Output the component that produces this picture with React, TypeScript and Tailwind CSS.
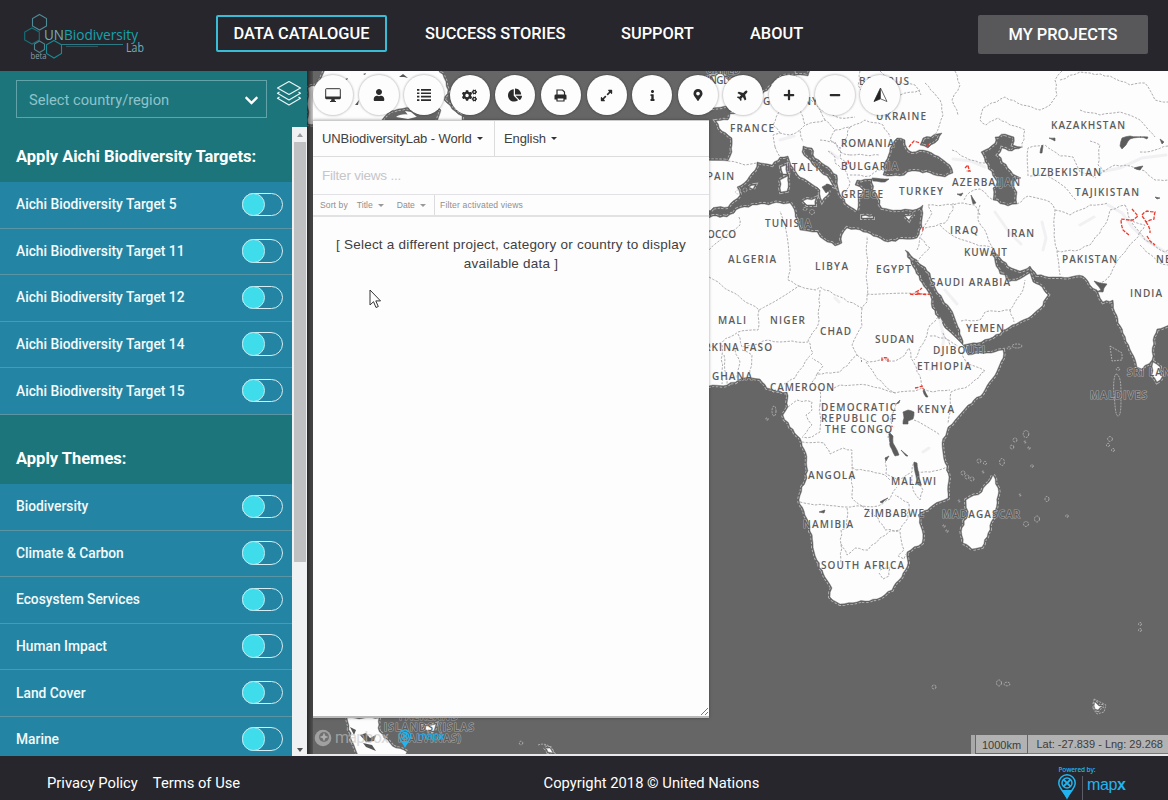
import React from "react";
import {
  FaUser, FaCogs, FaChartPie, FaExpandAlt, FaInfo,
  FaMapMarkerAlt, FaPlane, FaPlus, FaMinus, FaChevronDown,
} from "react-icons/fa";

/* ---------- map geometry ---------- */

const CONTINENT =
  "700,386 709,386 727,385 743,378 760,379 767,388 775,391 787,392 788,407 783,415 790,427 800,438 806,453 807,467 807,478 802,487 799,500 805,515 810,527 813,543 817,560 825,577 832,588 830,597 840,604 857,602 877,599 892,590 903,573 908,563 907,552 922,543 922,530 918,515 933,505 948,498 949,477 945,463 942,443 948,427 955,420 968,405 983,393 995,375 1003,358 1003,350 987,353 968,355 962,344 945,328 938,317 932,308 930,295 922,283 913,267 905,250 917,260 930,273 938,293 950,308 960,330 963,345 977,343 993,337 1012,325 1028,318 1040,308 1048,295 1042,287 1033,282 1030,273 1020,279 1008,282 1005,275 1000,274 995,262 991,251 998,255 1008,266 1020,271 1030,266 1037,275 1057,277 1083,276 1090,285 1097,290 1103,302 1113,300 1115,312 1123,333 1132,353 1137,367 1142,369 1152,360 1153,340 1157,329 1185,318 1185,50 820,50 808,76 796,75 782,76 776,84 764,92 752,105 737,113 730,114 728,120 716,121 722,131 732,138 732,152 728,161 700,160 700,214 717,207 728,207 740,195 737,187 747,180 755,170 757,162 772,165 780,157 788,156 791,165 800,177 812,184 820,190 822,201 829,193 826,184 833,186 829,179 815,167 807,158 802,152 803,146 812,148 815,158 825,165 837,175 838,187 842,197 848,205 857,211 858,198 863,190 855,185 857,180 872,179 873,190 878,197 882,208 897,210 913,210 923,205 923,213 922,227 917,238 903,239 888,242 877,237 860,230 847,228 842,235 842,243 835,246 820,237 817,232 800,230 797,220 795,213 790,203 780,203 757,205 740,208 727,217 713,216 700,220";

const INLAND_SEAS = [
  "883,175 885,162 890,148 897,138 905,140 907,148 912,152 923,150 935,155 950,165 953,173 945,177 930,173 912,171 900,176",
  "920,145 923,138 942,133 935,143 928,148",
  "1005,134 1014,137 1013,145 1022,147 1012,151 1002,148 998,155 1008,168 1013,174 1021,178 1013,182 1017,192 1017,204 1008,206 993,200 993,188 997,182 985,162 981,152 995,143 995,137",
];

const ISLANDS = [
  "993,475 998,488 997,503 988,533 982,547 972,549 963,543 962,528 968,515 966,500 982,492",
  "1153,362 1160,367 1162,377 1157,382 1152,375",
  "781,167 786,165 787,174 783,174",
  "780,180 788,176 787,191 781,192",
  "803,201 816,198 815,205 807,205",
  "862,216 873,216 873,218 862,218",
  "905,216 914,214 909,220",
  "749,187 755,185 753,189",
  "712,76 722,74 731,84 735,98 728,106 713,108 716,96",
  "347,718 379,718 378,728 384,738 396,748 407,752 404,757 360,757 352,741",
  "424,726 436,724 434,731 426,730",
  "544,747 550,748 553,753 548,752",
  "1095,702 1099,706 1103,706 1098,710 1095,709",
  "326,65 436,65 444,78 448,90 444,100 452,109 462,116 463,124 436,124 441,110 436,106 411,108 398,109 388,113 380,124 308,124 308,88 318,84",
];

const LAKES = [
  "903,412 908,410 914,412 913,419 908,421 908,424 903,424 904,418",
  "889,432 893,436 893,443 899,455 895,456 890,446",
  "914,462 917,463 919,474 921,486 917,484 915,472",
  "901,450 908,456 906,456",
  "885,458 889,456 886,461",
  "896,404 900,400 899,403",
  "819,512 825,510 824,513",
  "880,502 888,498 882,503",
  "924,389 928,397 926,397 923,391",
  "1120,146 1122,138 1130,136 1141,137 1130,139 1126,145 1122,149",
  "1140,137 1148,137 1147,139",
  "1134,168 1143,166 1140,170",
  "1160,139 1164,142 1162,144",
  "1049,138 1055,138 1055,141",
  "1040,153 1042,145 1043,146 1042,153",
  "971,195 976,203 973,204",
  "957,194 963,193 961,196",
  "872,178 889,179 885,182 873,181",
  "1096,292 1103,292 1104,288 1107,284 1100,283 1094,281 1101,290",
  "1155,197 1160,198 1157,199",
  "822,187 828,184 832,187 826,193",
];

const BORDERS = [
  "709,277 759,310 799,286 788,280 790,266 785,225 780,211",
  "799,286 816,290 820,287 862,308 867,302 867,236",
  "867,294 930,294", "862,308 862,326 852,345 857,355 840,372 817,374",
  "820,290 818,325 808,340 813,353 805,362 795,378 784,384",
  "759,310 758,330 738,332 718,344 709,348",
  "738,334 742,347 753,345 768,340 780,342 792,341 808,342",
  "857,355 868,362 880,360 895,361 905,355 909,348 911,358 914,363",
  "866,362 875,375 887,388 895,393 915,391 922,388 933,392 950,390",
  "914,363 921,380 923,388", "938,317 930,325 925,340 914,360", "930,336 945,338 958,346",
  "962,352 967,364 985,371 975,380 965,388 951,392 951,410 948,424",
  "817,374 812,382 820,390 820,405", "834,388 840,385 867,385 880,388 896,393",
  "724,355 727,384", "735,350 740,362 737,378", "742,350 752,355 750,376", "722,345 722,384",
  "817,374 823,366 812,358", "788,407 797,400 812,402 812,410 806,415 812,425 803,436",
  "820,405 820,432 812,437 802,437", "802,442 824,443 830,454 843,448 852,450 852,467 856,470",
  "852,467 852,498 862,506 878,506 890,499 897,487", "856,470 870,471 885,475 890,480",
  "886,457 886,474 898,480 912,472 914,462", "896,404 890,418 892,425 888,437 890,445",
  "914,420 940,435", "917,472 930,472 947,467", "912,475 913,490 920,500 923,490 920,482",
  "800,502 810,504 825,505 845,507 862,506", "847,508 847,528 841,530 841,563",
  "841,544 847,555 855,548 868,550 880,538 890,531 900,530 908,518 909,503 895,495",
  "862,506 878,518 885,530 900,531", "900,532 904,550 898,556 904,559 908,552",
  "880,570 890,568 889,576 883,579 879,573",
  "917,250 920,237 925,225 932,213 928,205 953,205 963,203 975,205 980,215",
  "925,228 945,223 953,210 953,203", "940,225 955,237 975,244 993,248", "917,262 930,248 920,238",
  "980,205 978,220 987,235 993,248", "964,200 970,192 980,189 993,200",
  "961,321 980,320 985,312 1010,310 1023,290 1025,280", "1010,310 1014,322",
  "1017,204 1028,196 1050,202 1055,210 1054,235 1057,250 1060,275", "1057,251 1075,251 1090,245 1105,225 1110,210 1125,205",
  "1055,210 1070,215 1090,205 1108,203", "1125,205 1130,220 1145,225 1135,240 1125,252 1115,265 1108,278 1100,283",
  "1028,176 1028,148 1045,145 1060,156 1073,157 1080,172 1096,178", "1030,176 1045,174 1062,185 1076,200",
  "1022,148 1025,130 1010,125 998,118 986,125 980,120 983,108 1005,97 1022,105 1040,110 1050,105 1057,95 1055,80 1062,71",
  "955,71 960,85 952,100 958,115", "952,150 970,160 985,163", "925,83 940,100 943,115 935,135",
  "1060,80 1080,72 1110,76 1130,85 1145,83 1155,100 1168,102", "1090,141 1100,145 1098,165 1105,173",
  "1100,174 1115,165 1130,166 1145,171 1155,180 1168,180", "1080,110 1100,115 1120,112 1140,120 1155,137",
  "1130,220 1145,240 1165,252 1168,250", "1140,245 1158,262 1168,265",
  "775,147 773,135 780,133 790,135 800,130 803,142", "775,147 780,157", "779,112 773,125 780,133",
  "795,71 800,85 806,95 820,110 840,118 855,117", "806,125 825,120 835,130 850,127 865,120 883,125 890,137",
  "785,95 800,108 805,125 800,130", "825,120 820,110", "820,140 835,142 840,152 850,155",
  "835,130 830,140 840,148 840,158 848,165", "850,127 845,140 840,148", "845,170 850,182 845,195",
  "850,175 870,176 878,170 885,170", "850,155 880,155", "890,110 900,95 920,90", "860,71 858,85 868,98 892,100",
  "728,161 745,165 757,163", "739,217 740,225 709,250", "943,333 950,345",
  "828,151 835,157 835,163 842,170", "880,71 895,82 915,85 921,95", "1140,152 1155,150 1168,146",
];

const DISPUTED = [
  "909,147 914,141 920,143", "927,147 929,143", "845,165 848,161 851,168",
  "965,168 968,165 970,171 966,171", "923,227 923,231",
  "910,294 920,294 916,292 922,288", "918,294 930,294", "882,361 882,358 888,358 888,362",
  "915,388 922,386 923,389", "892,427 892,426", "861,361 862,361",
  "1132,209 1138,216 1133,220 1121,219 1123,230 1129,235", "1142,215 1147,211 1155,212 1154,219 1146,222 1142,216",
  "1146,222 1150,230 1150,233", "1147,236 1150,241 1155,245",
];

const SMALL_ISLES: [number, number, number, number][] = [
  [1026, 434, 2.8, 3.5], [1015, 440, 2, 2], [1012, 447, 1.8, 2], [1025, 442, 1, 1], [1029, 448, 1.2, 1.2],
  [1110, 439, 2.4, 2.4], [1108, 445, 1.6, 1.6], [1113, 450, 1.5, 1.5], [979, 461, 2, 2], [985, 463, 1.6, 1.6],
  [963, 473, 2, 2], [967, 477, 2, 2], [972, 479, 2, 2], [983, 472, 1, 1], [1002, 462, 2.4, 3.5],
  [1032, 466, 1.3, 1.3], [1020, 495, 1, 1], [1047, 499, 2, 2.6], [1026, 524, 2.5, 2.5], [1037, 519, 2.5, 3],
  [1067, 516, 1.3, 1.3], [959, 501, 1, 1], [944, 526, 1.2, 1.2], [947, 531, 1.2, 1.2],
  [1140, 624, 1.5, 1.5], [1140, 630, 1.5, 1.5], [999, 683, 2.5, 3], [1007, 684, 3, 1.8], [934, 687, 2, 2],
  [521, 743, 1.8, 1.8], [774, 411, 2, 5], [767, 419, 1.2, 1.2], [1017, 346, 5, 2], [1009, 348, 2, 1.2],
  [1118, 369, 1.8, 1.4], [738, 192, 2.5, 2], [745, 190, 2, 2], [812, 212, 2.5, 2.5], [805, 209, 2, 1.5],
];

type Label = [string, number, number, number];
const LABELS: Label[] = [
  ["UNITED", 706, 740, 74], ["KINGDOM", 701, 746, 84], ["FRANCE", 730, 774, 132], ["GERMANY", 763, 818, 105], ["BELARUS", 859, 909, 85],
  ["UKRAINE", 876, 926, 120], ["ROMANIA", 841, 894, 147], ["BULGARIA", 841, 898, 170], ["GREECE", 841, 883, 198],
  ["ITALY", 787, 820, 171], ["SPAIN", 700, 734, 180], ["MOROCCO", 683, 736, 238], ["TUNISIA", 765, 811, 227],
  ["ALGERIA", 728, 776, 263], ["LIBYA", 815, 848, 270], ["EGYPT", 876, 911, 273], ["SAUDI ARABIA", 930, 1010, 286],
  ["KUWAIT", 964, 1007, 256], ["IRAQ", 950, 978, 234], ["IRAN", 1007, 1034, 237], ["TURKEY", 899, 943, 195],
  ["AZERBAIJAN", 952, 1020, 186], ["TAJIKISTAN", 1075, 1139, 196], ["UZBEKISTAN", 1032, 1101, 176],
  ["KAZAKHSTAN", 1051, 1125, 129], ["PAKISTAN", 1062, 1117, 263], ["NEPAL", 1156, 1192, 263], ["INDIA", 1130, 1162, 297],
  ["YEMEN", 966, 1004, 332], ["DJIBOUTI", 933, 985, 354], ["ETHIOPIA", 917, 971, 370], ["KENYA", 917, 954, 413],
  ["MALI", 718, 746, 324], ["NIGER", 770, 805, 324], ["CHAD", 820, 851, 335], ["SUDAN", 875, 914, 343],
  ["BURKINA FASO", 688, 772, 351], ["GHANA", 712, 752, 380], ["CAMEROON", 770, 834, 391],
  ["DEMOCRATIC", 821, 896, 411], ["REPUBLIC OF", 821, 896, 422], ["THE CONGO", 825, 892, 433],
  ["ANGOLA", 808, 855, 479], ["MALAWI", 891, 936, 485], ["ZIMBABWE", 864, 924, 517], ["NAMIBIA", 803, 853, 528],
  ["SOUTH AFRICA", 821, 904, 569], ["MADAGASCAR", 942, 1020, 518], ["MALDIVES", 1090, 1147, 399],
  ["SRI LANKA", 1127, 1186, 376], ["FALKLAND", 399, 458, 720], ["ISLANDS (ISLAS", 384, 474, 731], ["MALVINAS)", 398, 461, 742],
];

/* Breaks long segments into short, slightly displaced steps for a natural line. */
function trace(points: string, closed: boolean, amount: number, step = 4): string {
  const pts = points.split(" ").map((p) => p.split(",").map(Number));
  const out: string[] = [];
  const n = closed ? pts.length : pts.length - 1;
  for (let i = 0; i < n; i++) {
    const [ax, ay] = pts[i];
    const [bx, by] = pts[(i + 1) % pts.length];
    const length = Math.hypot(bx - ax, by - ay);
    const parts = Math.max(1, Math.round(length / step));
    for (let k = 0; k < parts; k++) {
      const t = k / parts;
      const x = ax + (bx - ax) * t;
      const y = ay + (by - ay) * t;
      const wave = k === 0 ? 0 : Math.sin(x * 12.9 + y * 78.2) * amount;
      out.push(`${(x - ((by - ay) / (length || 1)) * wave).toFixed(1)},${(y + ((bx - ax) / (length || 1)) * wave).toFixed(1)}`);
    }
  }
  if (!closed) out.push(pts[pts.length - 1].join(","));
  return `M${out.join("L")}${closed ? "Z" : ""}`;
}

const LAND = [CONTINENT, ...INLAND_SEAS, ...ISLANDS].map((p) => trace(p, true, 0.9)).join("");
const LAKE_PATH = LAKES.map((p) => trace(p, true, 0.4)).join("");
const BORDER_PATH = BORDERS.map((p) => trace(p, false, 0.8, 5)).join("");
const DISPUTED_PATH = DISPUTED.map((p) => trace(p, false, 0.5)).join("");

function WorldMap() {
  return (
    <svg className="block h-full w-full" viewBox="307 71 861 683" preserveAspectRatio="none">
      <rect x="307" y="71" width="861" height="685" fill="#666666" />
      <path d={LAND} fill="none" stroke="#b4b4b4" strokeWidth="4" strokeDasharray="2.5 1.5" />
      <path d={LAND} fill="none" stroke="#636363" strokeWidth="2.2" />
      <path d={LAND} fill="#fdfdfd" fillRule="evenodd" stroke="#5c5c5c" strokeWidth="0.4" />
      <g fill="none" stroke="#f1f1f4" strokeWidth="3" strokeLinecap="round">
        <path d="M1108 205l14 8 10 14 15 14 20 12M1100 172l20-4 22-10 24-3M1042 222l4 16-3 12M995 212l14 20 12 12M940 320l4 18-3 18M930 370l12-8M945 290l12 14M835 298l4 4M780 140l14-4M830 152l8 6M985 167l-14-6-18-2M1080 225l14-8M923 452l6-4" />
      </g>
      <path d={BORDER_PATH} fill="none" stroke="#aeaeb2" strokeWidth="1" strokeDasharray="2.4 1.4" />
      <path d={LAKE_PATH} fill="#5c5c5c" stroke="#5c5c5c" strokeWidth="0.6" />
      <path d={DISPUTED_PATH} fill="none" stroke="#ea3b2e" strokeWidth="1.3" strokeDasharray="3.5 1.3" />
      <g fill="none" stroke="#bdbdbd" strokeWidth="0.8" strokeDasharray="2 1">
        {SMALL_ISLES.map(([x, y, rx, ry]) => <ellipse key={`${x}-${y}`} cx={x} cy={y} rx={rx} ry={ry} />)}
        <path d="M1110 346l12 7v7l-10 1zM1116 374c5 1 5 12 5 22s0 20-3 20-3-14-4-22 0-19 2-20z" />
        <path d="M1094 699l12 6-2 7-7 2-3-4zM538 745c8-3 14 2 16 8" />
      </g>
      <g fill="#555555">
        <path d="M360 735l6-2 4 5 6-3-2 6-8 1zM350 727l6 3-2 5zM363 743l9 2 4 6-10-4zM363 74l3-1-1 2zM399 77l4-3 5 4-4-1zM355 105l4-5-1 5zM345 79l3-1-1 2z" />
      </g>
      <path d="M396 117c4-3 12-4 20 0l-8 2zM405 111l6 1 6 5-9-2z" fill="#fdfdfd" />
      <g fontFamily="'Open Sans','Noto Sans',sans-serif" fontSize="10" fontWeight="600" fill="#5c5c5c">
        {LABELS.map(([text, x0, x1, y]) => (
          <text key={text + x0} x={x0} y={y} textLength={x1 - x0} lengthAdjust="spacing" stroke="#ffffff" strokeOpacity="0.4" strokeWidth="1.2" paintOrder="stroke">
            {text}
          </text>
        ))}
      </g>
      <g opacity="0.6">
        <circle cx="323" cy="738" r="8.3" fill="#c8c8c8" />
        <circle cx="324" cy="737" r="5" fill="#777" />
        <path d="M324 732.5l1.3 3.2 3.2 1.3-3.2 1.3-1.3 3.2-1.3-3.2-3.2-1.3 3.2-1.3z" fill="#ddd" />
        <text x="335" y="743" fontFamily="Roboto, sans-serif" fontSize="16" fill="#c4c4c4" textLength="54">mapbox</text>
      </g>
      <Pin x={398.5} y={729.5} scale={0.72} />
      <text x="418" y="740" fontFamily="'Liberation Sans', sans-serif" fontSize="11.5" fill="#1ba9ea" textLength="27">map<tspan fontWeight="700">x</tspan></text>
    </svg>
  );
}

function Pin({ x, y, scale }: { x: number; y: number; scale: number }) {
  return (
    <g transform={`translate(${x} ${y}) scale(${scale})`}>
      <path d="M9 .8a8.2 8.2 0 0 0-8.2 8.2c0 5 4.800 8 8.200 15 3.400-7 8.200-10 8.200-15A8.200 8.200 0 0 0 9 .8z" fill="none" stroke="#22b4ee" strokeWidth="1.500" />
      <path d="M3.500 16h11L9 24.500z" fill="#22b4ee" />
      <circle cx="9" cy="9" r="5" fill="none" stroke="#22b4ee" strokeWidth="1.500" />
      <path d="M5.500 5.500l7 7M12.500 5.500l-7 7" stroke="#22b4ee" strokeWidth="1.800" />
    </g>
  );
}

/* ---------- chrome ---------- */

function Logo() {
  return (
    <svg className="h-[54px] w-[126px]" viewBox="22 8 126 54">
      <g fill="none" strokeWidth="1.100">
        <path d="M39.500 13.500l7 4v7.500l-7 4-7-4v-7.500z" stroke="#4d8c98" />
        <path d="M32 27l7.300 4v8l-7.300 4-7.300-4v-8z" stroke="#14727c" />
        <path d="M39.500 40l5 3v5.500l-5 3-5-3v-5.500z" stroke="#52818c" />
        <path d="M54 39.500l7.500 4.300v8.700L54 57l-7.500-4.500v-8.700z" stroke="#178a95" />
        <path d="M61 43.500h62" stroke="#2a7b86" />
        <path d="M66 45.500h32" stroke="#39535b" />
      </g>
      <text y="38.500" fontFamily="'Open Sans', sans-serif" fontSize="14.500">
        <tspan x="44" fill="#6fb0bc" textLength="20" lengthAdjust="spacingAndGlyphs">UN</tspan>
        <tspan x="64" fill="#14a3af" textLength="74" lengthAdjust="spacingAndGlyphs">Biodiversity</tspan>
      </text>
      <text x="126" y="50.500" fontFamily="'Open Sans', sans-serif" fontSize="12" fill="#6fb0bc" textLength="18" lengthAdjust="spacingAndGlyphs">Lab</text>
      <text x="30.500" y="57.500" fontFamily="'Open Sans', sans-serif" fontSize="9" fill="#84a0a9" textLength="16" lengthAdjust="spacingAndGlyphs">beta</text>
    </svg>
  );
}

function Header() {
  return (
    <header className="flex h-[71px] shrink-0 items-center bg-[#27262c] pl-[22px] pr-5 text-[16.400px] font-medium text-white">
      <Logo />
      <nav className="ml-[68px] mt-[-4px] flex items-center whitespace-nowrap">
        <a className="flex h-[37px] w-[171px] items-center justify-center rounded-[2px] border-2 border-[#3bbcd6] pt-0.5">DATA CATALOGUE</a>
        <a className="ml-[38px] w-[141px] pt-0.5">SUCCESS STORIES</a>
        <a className="ml-[55px] w-[73px] pt-0.5">SUPPORT</a>
        <a className="ml-[56px] pt-0.5">ABOUT</a>
      </nav>
      <button className="ml-auto mt-[-2px] h-[39px] w-[170px] rounded-[2px] bg-[#58585b] pt-0.5 font-medium">MY PROJECTS</button>
    </header>
  );
}

function ToggleRow({ label }: { label: string }) {
  return (
    <div className="flex h-[46.6px] shrink-0 items-center justify-between border-b border-[#5a95a4] pb-px pl-4 pr-[9px]">
      <span className="mt-[1.600px] text-[13.800px] font-medium leading-none text-[#f4fafc]">{label}</span>
      <span className="flex h-[23.500px] w-[41.500px] items-center rounded-full border border-[#d5edf3]">
        <span className="-ml-px h-[23.500px] w-[23.500px] rounded-full border border-[#bdeaf1] bg-[#3fdcec]" />
      </span>
    </div>
  );
}

function SectionTitle({ children, className }: { children: React.ReactNode; className: string }) {
  return (
    <h2 className={`flex shrink-0 items-end bg-[#1c757b] pl-4 text-[16.500px] font-bold leading-5 text-white ${className}`}>{children}</h2>
  );
}

function Sidebar() {
  const targets = [5, 11, 12, 14, 15];
  const themes = ["Biodiversity", "Climate & Carbon", "Ecosystem Services", "Human Impact", "Land Cover", "Marine"];
  return (
    <aside className="flex w-[307px] shrink-0 flex-col bg-[#1c757b]">
      <div className="flex h-14 shrink-0 items-start pl-4 pt-[9px]">
        <div className="flex h-[38px] w-[251px] items-center justify-between border border-[#62a3a9] pl-3 pr-[7px]">
          <span className="mt-[3px] text-[14.700px] text-[#8fc3cb]">Select country/region</span>
          <FaChevronDown className="mt-[3px] h-[15px] w-[15px] text-white" />
        </div>
        <svg className="ml-[9px] h-[27px] w-[26px]" viewBox="0 0 26 27" fill="none" stroke="#e8f5f6" strokeWidth="1.200" strokeLinejoin="round">
          <path d="M13 1.500L24.500 8 13 14.500 1.500 8z" />
          <path d="M3.500 12l-2 1.300L13 20l11.500-6.700-2-1.300" />
          <path d="M3.500 17l-2 1.300L13 25l11.500-6.700-2-1.300" />
        </svg>
      </div>
      <div className="flex min-h-0 flex-1">
        <div className="flex w-[292px] flex-col overflow-hidden bg-[#2385a3]">
          <SectionTitle className="h-[55px] pb-[15px]">Apply Aichi Biodiversity Targets:</SectionTitle>
          {targets.map((n) => <ToggleRow key={n} label={`Aichi Biodiversity Target ${n}`} />)}
          <SectionTitle className="h-[69px] pb-[15px]">Apply Themes:</SectionTitle>
          {themes.map((t) => <ToggleRow key={t} label={t} />)}
        </div>
        <div className="flex w-[15px] flex-col items-center bg-[#f0f1f3]">
          <div className="flex h-[15px] items-center">
            <span className="border-x-[3.500px] border-b-[4px] border-x-transparent border-b-[#9b9b9b]" />
          </div>
          <div className="h-[420px] w-3 bg-[#bfc0c2]" />
          <div className="mt-auto flex h-[13px] items-center">
            <span className="border-x-[3.500px] border-t-[4px] border-x-transparent border-t-[#505050]" />
          </div>
        </div>
      </div>
    </aside>
  );
}

function DesktopIcon() {
  return (
    <svg className="h-[14px] w-4" viewBox="0 0 16 14" fill="none">
      <path d="M1.300 .7h13.400a.6.6 0 0 1 .6.600v8.900H.700V1.300a.6.600 0 0 1 .6-.600z" stroke="#333" strokeWidth="1" />
      <path d="M.500 8.500h15v2a.8.800 0 0 1-.800.800H1.300a.800.800 0 0 1-.800-.800zM6.500 11h3l.5 2h1v1H5v-1h1z" fill="#333" />
    </svg>
  );
}

function NorthIcon() {
  return (
    <svg className="h-4 w-[15px]" viewBox="0 0 15 16">
      <path d="M7.500 1L1 14.500l6.500-2.700z" fill="#222" stroke="#222" strokeWidth=".8" strokeLinejoin="round" />
      <path d="M7.500 1L14 14.500l-6.500-2.700z" fill="#fff" stroke="#444" strokeWidth=".8" strokeLinejoin="round" />
    </svg>
  );
}

function ListIcon() {
  return (
    <svg className="h-3 w-[14px]" viewBox="0 0 14 12" fill="#2b2b2b">
      <path d="M0 0h2.400v1.700H0zM0 3.400h2.400v1.700H0zM0 6.800h2.400v1.700H0zM0 10.200h2.400v1.700H0zM4 0h10v1.700H4zM4 3.400h10v1.700H4zM4 6.800h10v1.700H4zM4 10.200h10v1.700H4z" />
    </svg>
  );
}

function PrintIcon() {
  return (
    <svg className="h-[13px] w-[13px]" viewBox="0 0 13 13" fill="none" stroke="#2b2b2b">
      <path d="M3 6V1h5.500L10.500 3v3" strokeWidth="1.200" />
      <path d="M1.800 5.500h9.400a1.300 1.300 0 0 1 1.300 1.300V10.500h-12V6.800a1.300 1.300 0 0 1 1.300-1.300z" fill="#2b2b2b" stroke="none" />
      <path d="M3 9h7v3H3z" fill="#fdfdfd" strokeWidth="1.200" />
    </svg>
  );
}

function Toolbar() {
  const icons = [
    <DesktopIcon />, <FaUser size={12} />, <ListIcon />, <FaCogs size={15} />, <FaChartPie size={14} />,
    <PrintIcon />, <FaExpandAlt size={13} />, <FaInfo size={11} />, <FaMapMarkerAlt size={12} />,
    <FaPlane size={12} className="-rotate-45" />, <FaPlus size={12} />, <FaMinus size={12} />, <NorthIcon />,
  ];
  return (
    <div className="absolute left-[6px] top-1 flex gap-[5.600px]">
      {icons.map((icon, i) => (
        <button key={i} className="flex h-10 w-10 items-center justify-center rounded-full bg-[#fdfdfd] text-[#2b2b2b] shadow-[0_0_2px_1px_rgba(0,0,0,0.200)]">
          {icon}
        </button>
      ))}
    </div>
  );
}

function Caret({ small = false }: { small?: boolean }) {
  return <span className={`ml-[5px] inline-block border-x-[3px] border-t-[3px] border-x-transparent align-middle ${small ? "border-t-[#999999]" : "border-t-[#333333]"}`} />;
}

function ViewsPanel() {
  return (
    <section className="absolute left-[6px] top-[49px] flex h-[598px] w-[396px] flex-col border-b-2 border-t border-b-[#b9b9b9] border-t-[#cccccc] bg-[#fdfdfd] font-['Liberation_Sans',Arial,sans-serif] text-[#404040] shadow-[0_0_3px_rgba(0,0,0,0.350)]">
      <div className="flex h-9 shrink-0 border-b border-[#dcdcdc] text-[13px]">
        <div className="flex w-[182px] items-center border-r border-[#dcdcdc] pl-[9px]"><span className="whitespace-nowrap tracking-[-0.100px]">UNBiodiversityLab - World</span><Caret /></div>
        <div className="flex items-center pl-[9px] tracking-[-0.100px]">English<Caret /></div>
      </div>
      <div className="flex h-[38px] shrink-0 items-center border-b border-[#e2e2e6] pl-[9px] pt-0.5 text-[13.500px] tracking-[-0.220px] text-[#c6c6ca]">Filter views ...</div>
      <div className="flex h-[22px] shrink-0 border-b-2 border-[#e2e2e4] text-[8.600px] text-[#8f8f8f]">
        <div className="flex w-[122px] items-center border-r border-[#dcdcdc] pl-[7px]">
          <span className="tracking-[0.080px]">Sort by</span>
          <span className="ml-[9px]">Title<Caret small /></span>
          <span className="ml-[13px]">Date<Caret small /></span>
        </div>
        <span className="flex items-center pl-[5px] tracking-[0.150px]">Filter activated views</span>
      </div>
      <p className="mt-[18px] text-center text-[13.500px] leading-[19px] tracking-[0.220px]">
        [ Select a different project, category or country to display<br />available data ]
      </p>
      <svg className="ml-auto mt-auto h-2 w-2" viewBox="0 0 8 8" stroke="#777" strokeWidth="1"><path d="M0 7L7 0M4 7l3-3" /></svg>
    </section>
  );
}

function MapArea() {
  return (
    <main className="relative min-w-0 flex-1 overflow-hidden border-b-2 border-[#e9e9e9] bg-[#666666]">
      <WorldMap />
      <div className="absolute inset-y-0 left-0 w-[6px] bg-gradient-to-r from-black/60 to-black/20" />
      <ViewsPanel />
      <Toolbar />
      <svg className="absolute left-[62px] top-[218px] h-[20px] w-[13px]" viewBox="0 0 13 20">
        <path d="M1 1v15l3.500-3.300 2.500 5.800 2.300-1-2.500-5.600H11.500z" fill="#fff" stroke="#333" />
      </svg>
      <div className="absolute bottom-0 right-0 flex h-[19px] border-l-4 border-[#a8a8a8] bg-[#b2b2b2] font-['Liberation_Sans',Arial,sans-serif] text-[11px] text-[#3c3c3c]">
        <span className="flex w-[53px] items-center justify-center border border-t-0 border-[#666666] pt-0.5">1000km</span>
        <span className="flex w-[140px] items-center justify-end whitespace-nowrap border-b border-[#777777] pr-[5px] pt-px">Lat: -27.839 - Lng: 29.268</span>
      </div>
    </main>
  );
}

function Footer() {
  return (
    <footer className="grid h-11 shrink-0 grid-cols-[1fr_auto_1fr] items-center bg-[#27262c] pt-[10px] text-[14.750px] text-white">
      <div className="flex gap-[15px] pl-[47px]"><a>Privacy Policy</a><a>Terms of Use</a></div>
      <span className="ml-[135px]">Copyright 2018 © United Nations</span>
      <svg className="-mt-[10px] ml-auto mr-[38px] h-11 w-[74px]" viewBox="1056 756 74 44">
        <text x="1058.500" y="772" fontFamily="'Open Sans', sans-serif" fontSize="6.500" fontWeight="600" fill="#22b4ee" textLength="37">Powered by:</text>
        <Pin x={1058} y={774} scale={1} />
        <path d="M1082.500 776v24" stroke="#5c5c66" />
        <text x="1087" y="789.500" fontFamily="'Liberation Sans', sans-serif" fontSize="16" fill="#22b4ee" textLength="39">map<tspan fontWeight="700">x</tspan></text>
      </svg>
    </footer>
  );
}

export default function App() {
  return (
    <div className="flex h-[800px] w-[1168px] flex-col overflow-hidden bg-[#27262c] font-[Roboto,sans-serif]">
      <Header />
      <div className="flex min-h-0 flex-1">
        <Sidebar />
        <MapArea />
      </div>
      <Footer />
    </div>
  );
}
